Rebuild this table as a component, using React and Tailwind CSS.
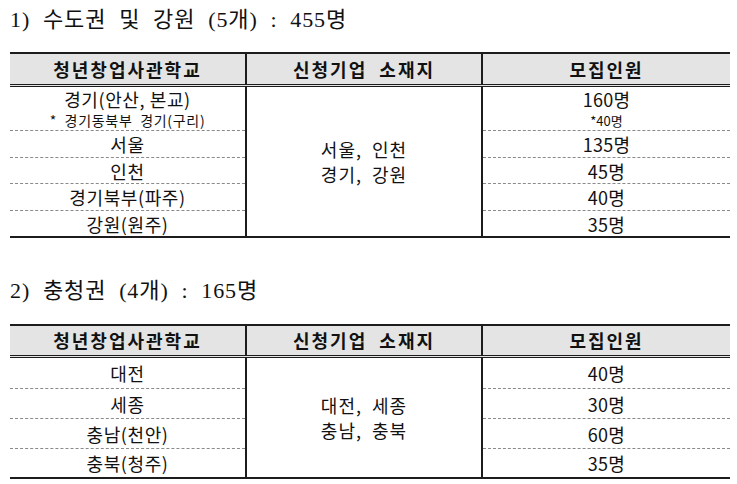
import React from "react";

const sections = [
  {
    title: "1)  수도권  및  강원  (5개)  :  455명",
    headerH: "h-[30px]",
    middle: ["서울,  인천", "경기,  강원"],
    rows: [
      { h: "h-[44px]", school: "경기(안산, 본교)", schoolSub: "*  경기동북부  경기(구리)", count: "160명", countSub: "*40명" },
      { h: "h-[27px]", school: "서울", count: "135명" },
      { h: "h-[26px]", school: "인천", count: "45명" },
      { h: "h-[27px]", school: "경기북부(파주)", count: "40명" },
      { h: "h-[25px]", school: "강원(원주)", count: "35명", last: true },
    ],
  },
  {
    title: "2)  충청권  (4개)  :  165명",
    headerH: "h-[29px]",
    middle: ["대전,  세종", "충남,  충북"],
    rows: [
      { h: "h-[31px]", school: "대전", count: "40명" },
      { h: "h-[30px]", school: "세종", count: "30명" },
      { h: "h-[30px]", school: "충남(천안)", count: "60명" },
      { h: "h-[28px]", school: "충북(청주)", count: "35명", last: true },
    ],
  },
];

// one body cell, dashed line under it unless it is the last row
const Cell = ({ row, main, sub, mainClass, subClass }) => (
  <div
    className={`${row.h} flex flex-col items-center justify-center ${
      row.last ? "" : "border-b border-dashed border-[#8a8a8a]"
    }`}
  >
    <span className={`whitespace-pre text-[18px] ${sub ? "leading-[24px]" : "leading-[20px]"} ${mainClass}`}>{main}</span>
    {sub && <span className={`whitespace-pre leading-[19px] ${subClass}`}>{sub}</span>}
  </div>
);

const RecruitTable = ({ section }) => (
  <div className="w-[720px] border-t-2 border-b-2 border-[#1c1c1c]">
    {/* header */}
    <div className={`flex ${section.headerH} bg-[#e4e4e4] border-b-[3px] border-double border-[#1c1c1c] box-content font-bold text-[18px] tracking-[2px]`}>
      <div className="w-[235px] flex items-center justify-center">청년창업사관학교</div>
      <div className="w-[236px] border-l-2 border-[#1c1c1c] flex items-center justify-center whitespace-pre">신청기업  소재지</div>
      <div className="w-[249px] border-l-2 border-[#1c1c1c] flex items-center justify-center">모집인원</div>
    </div>

    {/* body */}
    <div className="flex">
      <div className="w-[235px] flex flex-col">
        {section.rows.map((r) => (
          <Cell
            key={r.school}
            row={r}
            main={r.school}
            sub={r.schoolSub}
            mainClass="tracking-[0.6px]"
            subClass="text-[14px] tracking-[0.7px]"
          />
        ))}
      </div>
      <div className="w-[236px] border-l-2 border-[#1c1c1c] flex flex-col items-center justify-center text-[18px] leading-[25px] tracking-[1px]">
        {section.middle.map((line) => (
          <span key={line} className="whitespace-pre">{line}</span>
        ))}
      </div>
      <div className="w-[249px] border-l-2 border-[#1c1c1c] flex flex-col">
        {section.rows.map((r) => (
          <Cell
            key={r.count + r.school}
            row={r}
            main={r.count}
            sub={r.countSub}
            mainClass="tracking-[0.3px]"
            subClass="text-[13px]"
          />
        ))}
      </div>
    </div>
  </div>
);

export default function App() {
  return (
    <div className="w-[737px] h-[484px] bg-white text-[#111] pl-[10px] font-['Noto_Sans_CJK_KR',sans-serif]">
      {/* section 1 */}
      <div className="h-[38px] flex items-center text-[22px] tracking-[0.9px] whitespace-pre font-['Liberation_Serif','Noto_Sans_CJK_KR',serif]">
        {sections[0].title}
      </div>
      <div className="mt-[14px]">
        <RecruitTable section={sections[0]} />
      </div>

      {/* section 2 */}
      <div className="mt-[33px] h-[38px] flex items-center text-[22px] tracking-[0.9px] whitespace-pre font-['Liberation_Serif','Noto_Sans_CJK_KR',serif]">
        {sections[1].title}
      </div>
      <div className="mt-[15px]">
        <RecruitTable section={sections[1]} />
      </div>
    </div>
  );
}
